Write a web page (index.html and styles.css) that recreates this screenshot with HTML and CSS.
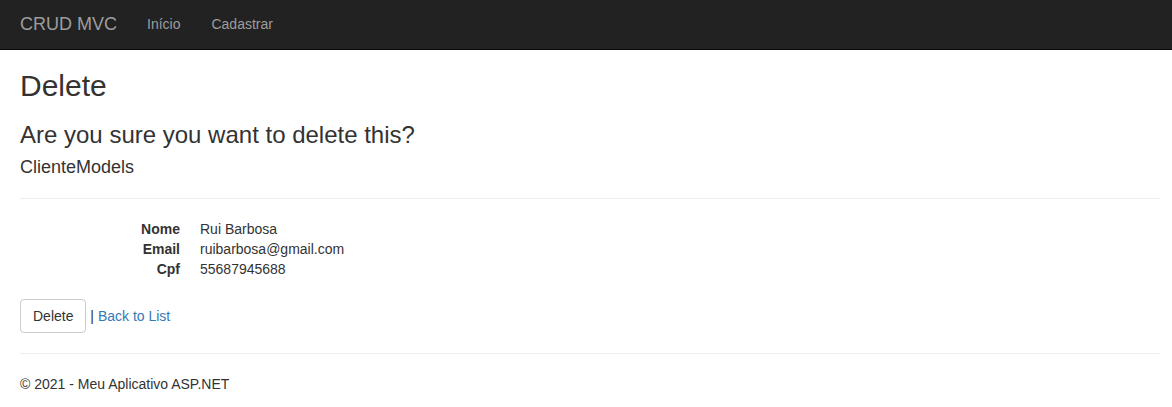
FILE: index.html
```html
<!DOCTYPE html>
<html lang="pt-BR">
<head>
<meta charset="utf-8">
<title>Delete - CRUD MVC</title>
<link rel="stylesheet" href="styles.css">
</head>
<body>
<nav class="navbar">
  <a class="brand" href="#">CRUD MVC</a>
  <ul class="nav">
    <li><a href="#">Início</a></li>
    <li><a href="#">Cadastrar</a></li>
  </ul>
</nav>
<div class="body-content">
  <h2 class="title">Delete</h2>
  <h3 class="question">Are you sure you want to delete this?</h3>
  <div>
    <h4 class="model">ClienteModels</h4>
    <hr class="rule">
    <dl class="details">
      <dt>Nome</dt><dd>Rui Barbosa</dd>
      <dt>Email</dt><dd>ruibarbosa@gmail.com</dd>
      <dt>Cpf</dt><dd>55687945688</dd>
    </dl>
    <form class="actions">
      <button type="button" class="btn">Delete</button> | <a href="#" class="link">Back to List</a>
    </form>
  </div>
  <hr class="rule">
  <footer class="footer">
    <p>© 2021 - Meu Aplicativo ASP.NET</p>
  </footer>
</div>
</body>
</html>
```
FILE: styles.css
```css
* { box-sizing: border-box; }
html, body { margin: 0; padding: 0; }
body {
  font-family: "Liberation Sans", Arial, Helvetica, sans-serif;
  font-size: 14px;
  line-height: 20px;
  color: #333;
  background: #fff;
}
.navbar {
  height: 50px;
  background: #222;
  border-bottom: 1px solid #080808;
  display: flex;
  align-items: center;
  padding: 0 20px 2px;
}
.brand {
  color: #9d9d9d;
  font-size: 18px;
  line-height: 20px;
  text-decoration: none;
  margin-right: 15px;
}
.nav {
  display: flex;
  list-style: none;
  margin: 0;
  padding: 0;
}
.nav a {
  display: block;
  padding: 15px 15px 15px 15px;
  color: #9d9d9d;
  text-decoration: none;
  font-size: 14px;
  line-height: 20px;
}
.nav li + li a { padding-left: 16px; }
.body-content {
  padding: 0 12px 0 20px;
}
.title {
  font-size: 30px;
  font-weight: 500;
  line-height: 1.1;
  margin: 19px 0 10px;
}
.question {
  font-size: 24px;
  font-weight: 500;
  line-height: 1.1;
  margin: 20px 0 10px;
}
.model {
  font-size: 18px;
  font-weight: 500;
  line-height: 1.1;
  margin: 10px 0 8px;
}
.rule {
  margin: 20px 0;
  border: 0;
  border-top: 1px solid #eee;
  height: 0;
}
.details {
  display: grid;
  grid-template-columns: 160px 1fr;
  column-gap: 20px;
  margin: 0 0 20px;
}
.details dt {
  font-weight: bold;
  text-align: right;
}
.details dd { margin: 0; }
.actions { margin: 0; }
.btn {
  font-family: inherit;
  font-size: 14px;
  line-height: 20px;
  color: #333;
  background: #fff;
  border: 1px solid #ccc;
  border-radius: 4px;
  padding: 6px 12px;
}
.link {
  color: #337ab7;
  text-decoration: none;
}
.footer p { margin: 0 0 10px; }
```
